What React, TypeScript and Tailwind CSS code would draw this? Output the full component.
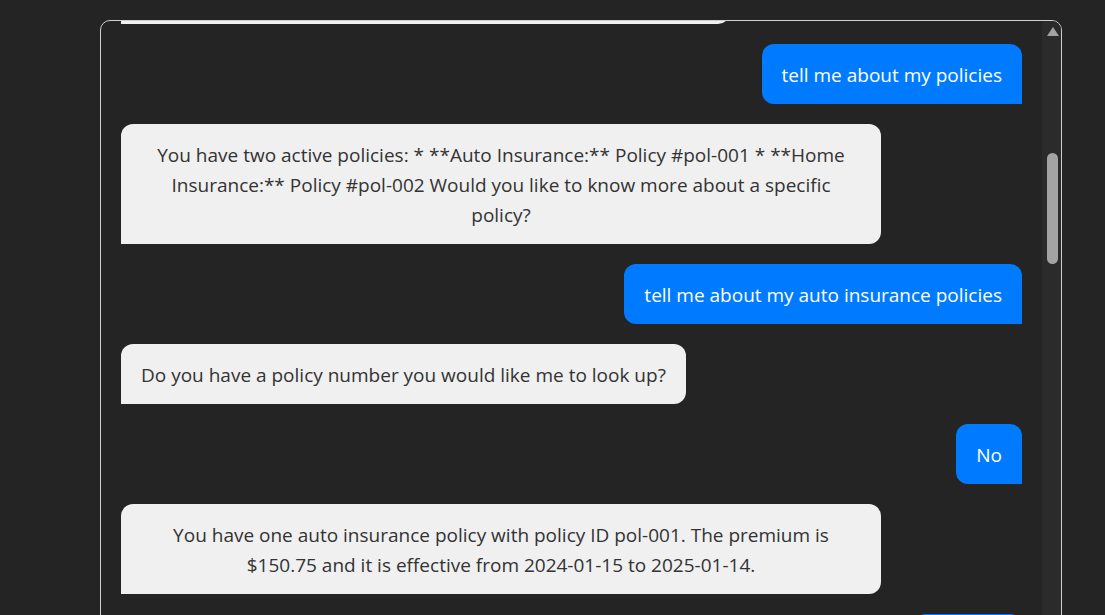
import React, { useLayoutEffect, useRef } from "react";

type Msg = { from: "ai" | "user"; text: string };

const messages: Msg[] = [
  { from: "ai", text: "Hi there! I'm your insurance assistant. How can I help you today?" },
  { from: "user", text: "tell me about my policies" },
  {
    from: "ai",
    text: "You have two active policies: * **Auto Insurance:** Policy #pol-001 * **Home Insurance:** Policy #pol-002 Would you like to know more about a specific policy?",
  },
  { from: "user", text: "tell me about my auto insurance policies" },
  { from: "ai", text: "Do you have a policy number you would like me to look up?" },
  { from: "user", text: "No" },
  {
    from: "ai",
    text: "You have one auto insurance policy with policy ID pol-001. The premium is $150.75 and it is effective from 2024-01-15 to 2025-01-14.",
  },
  { from: "user", text: "Thanks!" },
  { from: "ai", text: "You're welcome! Is there anything else I can help you with?" },
  { from: "user", text: "No, that's all" },
  { from: "ai", text: "Have a great day!" },
];

export default function App() {
  const scrollRef = useRef<HTMLDivElement>(null);
  const anchorRef = useRef<HTMLDivElement>(null);

  useLayoutEffect(() => {
    const s = scrollRef.current;
    const a = anchorRef.current;
    if (s && a) {
      s.scrollTop = a.offsetTop - 23;
    }
  }, []);

  return (
    <div
      className="w-[1105px] h-[615px] overflow-hidden bg-[#242424] pt-[20px] pl-[100px]"
      style={{ fontFamily: '"Open Sans", "Noto Sans", sans-serif' }}
    >
      <div className="w-[962px] h-[620px] border border-[#cfcfcf] rounded-[10px] flex overflow-hidden">
        <div ref={scrollRef} className="relative flex-1 overflow-hidden">
          <div className="flex flex-col gap-[20px] px-[20px] py-[20px]">
            {messages.map((m, i) =>
              m.from === "user" ? (
                <div
                  key={i}
                  ref={i === 1 ? anchorRef : undefined}
                  className="self-end max-w-[760px] bg-[#007bff] text-white text-[19px] leading-[30px] px-[20px] pt-[16px] pb-[14px] rounded-t-[12px] rounded-bl-[12px] rounded-br-none"
                >
                  {m.text}
                </div>
              ) : (
                <div
                  key={i}
                  className="self-start max-w-[760px] bg-[#f0f0f0] text-[#333333] text-[19px] leading-[30px] text-center px-[20px] pt-[16px] pb-[14px] rounded-t-[12px] rounded-br-[12px] rounded-bl-none"
                >
                  {m.text}
                </div>
              )
            )}
          </div>
        </div>
        <div className="w-[19px] bg-[#2b2b2b] flex flex-col items-center pt-[6px]">
          <svg width="12" height="9" viewBox="0 0 12 9" className="ml-[2px]">
            <polygon points="6,0 12,9 0,9" fill="#a3a3a3" />
          </svg>
          <div className="ml-[2px] mt-[117px] w-[11px] h-[111px] rounded-full bg-[#a3a3a3]" />
        </div>
      </div>
    </div>
  );
}
